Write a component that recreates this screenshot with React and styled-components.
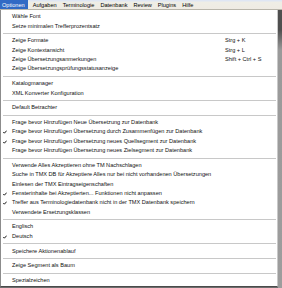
import React from "react";
import styled, { createGlobalStyle } from "styled-components";

const Global = createGlobalStyle`
  html, body { margin: 0; padding: 0; background: #7a7a7a; overflow: hidden; }
  #root { width: 282px; height: 288px; }
`;

const Screen = styled.div`
  width: 282px;
  height: 288px;
  display: flex;
  flex-direction: column;
  font-family: "Liberation Sans", Arial, sans-serif;
  font-size: 5.6px;
  color: #111;
  overflow: hidden;
  background: #6e6e6e;
`;

const MenuBar = styled.div`
  height: 10px;
  flex: none;
  display: flex;
  align-items: stretch;
  background: linear-gradient(#dfe6f3 0, #dfe6f3 1px, #efeee6 2px, #efebe3 100%);
  border-bottom: 1px solid #b9b6ab;
  box-sizing: border-box;
`;

const BarItem = styled.div`
  display: flex;
  align-items: center;
  padding: 0 ${p => (p.$first ? "3px 0 2px" : "3px")};
  background: ${p => (p.$active ? "#316ac5" : "transparent")};
  color: ${p => (p.$active ? "#fff" : "#000")};
  margin-right: ${p => (p.$first ? "2px" : "0")};
`;

const Body = styled.div`
  flex: 1;
  display: flex;
  min-height: 0;
  align-items: flex-start;
`;

const Panel = styled.div`
  width: 278px;
  flex: none;
  background: #fff;
  border-left: 1px solid #8c8c8c;
  border-right: 1px solid #c9c9c9;
  border-bottom: 1px solid #4a4a4a;
  box-sizing: border-box;
  padding-top: 2.3px;
  height: 277px;
  display: flex;
  flex-direction: column;
  overflow: hidden;
`;

const Shadow = styled.div`
  flex: 1;
  align-self: stretch;
  background: linear-gradient(#4f4f4f 0, #4f4f4f 20px, #9a9a9a 40px, #9d9d9d 100%);
`;

const Item = styled.div`
  height: 9.35px;
  line-height: 9.35px;
  display: flex;
  align-items: center;
  position: relative;
  padding-left: 11px;
  white-space: nowrap;
  flex: none;
`;

const Check = styled.svg`
  position: absolute;
  left: 2px;
  top: 3px;
  width: 4px;
  height: 4px;
`;

const Label = styled.span`
  flex: 1;
`;

const Shortcut = styled.span`
  width: 52px;
  flex: none;
`;

const Sep = styled.div`
  height: 5.45px;
  flex: none;
  display: flex;
  align-items: center;
  padding: 0 1px 0 2px;
  &::after {
    content: "";
    flex: 1;
    height: 1px;
    background: #c8c8c8;
  }
`;

const groups = [
  [["Wähle Font"], ["Setze minimalen Trefferprozentsatz"]],
  [
    ["Zeige Formate", "Strg + K"],
    ["Zeige Kontextansicht", "Strg + L"],
    ["Zeige Übersetzungsanmerkungen", "Shift + Ctrl + S"],
    ["Zeige Übersetzungsprüfungsstatusanzeige"],
  ],
  [["Katalogmanager"], ["XML Konverter Konfiguration"]],
  [["Default Betrachter"]],
  [
    ["Frage bevor Hinzufügen Neue Übersetzung zur Datenbank"],
    ["Frage bevor Hinzufügen Übersetzung durch Zusammenfügen zur Datenbank", null, true],
    ["Frage bevor Hinzufügen Übersetzung neues Quellsegment zur Datenbank", null, true],
    ["Frage bevor Hinzufügen Übersetzung neues Zielsegment zur Datenbank"],
  ],
  [
    ["Verwende Alles Akzeptieren ohne TM Nachschlagen"],
    ["Suche in TMX DB für Akzeptiere Alles nur bei nicht vorhandenen Übersetzungen"],
    ["Einlesen der TMX Eintragseigenschaften"],
    ["Fensterinhalte bei Akzeptierten... Funktionen nicht anpassen", null, true],
    ["Treffer aus Terminologiedatenbank nicht in der TMX Datenbank speichern", null, true],
    ["Verwendete Ersetzungsklassen"],
  ],
  [["Englisch"], ["Deutsch", null, true]],
  [["Speichere Aktionenablauf"]],
  [["Zeige Segment als Baum"]],
  [["Spezialzeichen"]],
];

const bar = ["Aufgaben", "Terminologie", "Datenbank", "Review", "Plugins", "Hilfe"];

export default function App() {
  return (
    <>
      <Global />
      <Screen>
        <MenuBar>
          <BarItem $active $first>Optionen</BarItem>
          {bar.map(b => (
            <BarItem key={b}>{b}</BarItem>
          ))}
        </MenuBar>
        <Body>
          <Panel>
            {groups.map((g, gi) => (
              <React.Fragment key={gi}>
                {gi > 0 && <Sep />}
                {g.map(([label, sc, checked]) => (
                  <Item key={label}>
                    {checked && (
                      <Check viewBox="0 0 4 4">
                        <path d="M0.3 2 L1.4 3.2 L3.7 0.6" fill="none" stroke="#000" strokeWidth="0.9" />
                      </Check>
                    )}
                    <Label>{label}</Label>
                    {sc && <Shortcut>{sc}</Shortcut>}
                  </Item>
                ))}
              </React.Fragment>
            ))}
          </Panel>
          <Shadow />
        </Body>
      </Screen>
    </>
  );
}
